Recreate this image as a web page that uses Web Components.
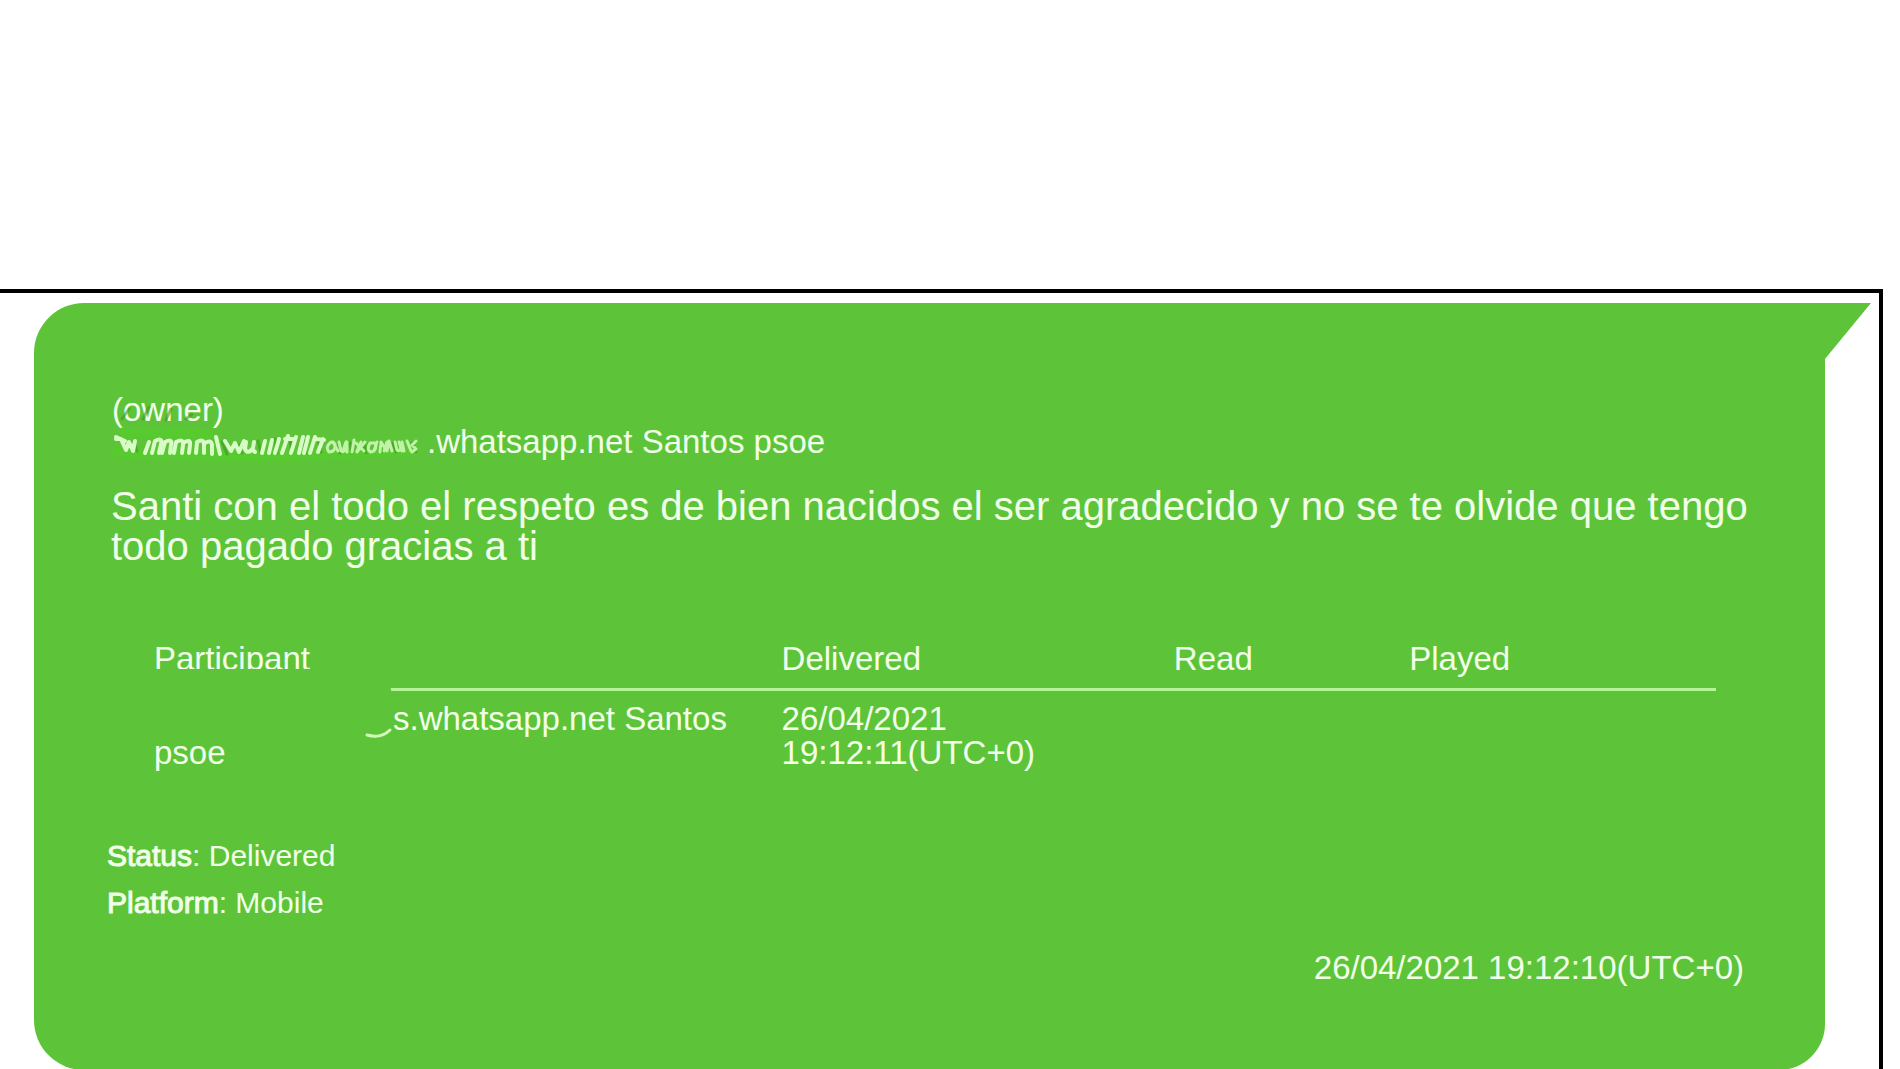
<!DOCTYPE html>
<html lang="es">
<head>
<meta charset="UTF-8">
<meta name="viewport" content="width=device-width, initial-scale=1.0">
<title>Chat message report</title>
<style>
  * { box-sizing: border-box; }
  html, body { margin: 0; }
  body {
    --bubble: #5dc43a;
    --ink: #f1ffe9;
    --rule: #b5f59a;
    background: #fff;
    color: var(--ink);
    font-family: "Liberation Sans", Arial, sans-serif;
    font-size: 33px;
    height: 100vh;
    overflow: hidden;
  }
</style>
</head>
<body>
<report-frame>
  <chat-bubble>
    <message-sender name="(owner)" address=".whatsapp.net Santos psoe"></message-sender>
    <message-text>Santi con el todo el respeto es de bien nacidos el ser agradecido y no se te olvide que tengo todo pagado gracias a ti</message-text>
    <participant-table></participant-table>
    <message-meta status="Delivered" platform="Mobile"></message-meta>
    <message-time>26/04/2021 19:12:10(UTC+0)</message-time>
  </chat-bubble>
</report-frame>

<script>
// Page frame: black line on the top and right side
class ReportFrame extends HTMLElement {
  constructor() {
    super();
    this.attachShadow({ mode: 'open' });
  }

  connectedCallback() {
    this.shadowRoot.innerHTML = `
      <style>
        :host {
          display: block;
          margin: 289px 17px 0 0;
          padding: 10px 54px 40px 34px;
          border-top: 4px solid #000;
          border-right: 4px solid #000;
        }
      </style>
      <slot></slot>
    `;
  }
}

class ChatBubble extends HTMLElement {
  constructor() {
    super();
    this.attachShadow({ mode: 'open' });
  }

  connectedCallback() {
    this.shadowRoot.innerHTML = `
      <style>
        :host {
          display: block;
          position: relative;
          background: var(--bubble);
          border-radius: 50px 0 46px 50px;
          padding: 91px 71px 85px 73px;
        }
        .tail {
          position: absolute;
          top: 0;
          left: 100%;
          width: 46px;
          height: 56px;
          fill: var(--bubble);
        }
      </style>
      <svg class="tail" viewBox="0 0 46 56" aria-hidden="true"><path d="M-1 0H46L0 56H-1Z"/></svg>
      <slot></slot>
    `;
  }
}

class MessageSender extends HTMLElement {
  constructor() {
    super();
    this.attachShadow({ mode: 'open' });
  }

  connectedCallback() {
    this.render();
  }

  render() {
    this.shadowRoot.innerHTML = `
      <style>
        :host {
          display: block;
          margin: 0 5px 28px;
          line-height: 32px;
        }
        .address {
          display: flex;
        }
        svg {
          width: 315px;
          height: 32px;
          flex: none;
          overflow: visible;
        }
        path {
          fill: none;
          stroke-linecap: round;
          stroke-linejoin: round;
        }
        .smear { stroke: #55cc2c; stroke-width: 10; opacity: 0.8; }
        .shade { stroke: #3f9a20; stroke-width: 3; opacity: 0.6; }
        .light { stroke: #d8fcc6; stroke-width: 4; }
        .thin { stroke: #c0f2a8; stroke-width: 3; }
      </style>
      <div>${this.getAttribute('name')}</div>
      <div class="address">
        <svg viewBox="0 0 315 32" aria-hidden="true">
          <path class="smear" d="M4 27C50 31 80 28 120 30S240 28 302 25M12 6C50 7 70 5 96 8"/>
          <path class="shade" d="M10 -7l7 -10M31 -7l6 -12M54 -6l5 -11M74 -7l6 -5M22 16l3 9M110 16l5 12M127 19l3 8M146 15l3 12M163 13l2 14M178 13l2 14M192 13l2 14M206 13l3 13M224 19l4 8M238 17l2 10M252 17l2 10M268 18l2 8M281 17l3 9M300 17l4 9"/>
          <path class="light" d="M4 13l5 0l5 11l3 -8l4 9l2 -10M4 11l9 4"/>
          <path class="light" d="M33 27l4 -11M40 27l3 -12q8 -4 6 3l-2 9M50 27l3 -11q8 -4 6 3l-1 8M62 27l2 -11q8 -4 7 3l-1 8M71 17q8 -5 7 2l-1 8M84 27l1 -11q7 -4 7 3l0 8M93 17q6 -4 7 2l0 9"/>
          <path class="light" d="M104 11l4 17M113 15l6 10l4 -8l4 9l5 -11M134 16l-1 7q3 6 8 -1l1 -6M141 24l2 2M153 15l-3 12M160 14l-3 13M167 13l-4 14M176 10l-6 17M173 13h8M184 11l-5 16M191 11l-4 16M196 11l-4 16M203 11l-5 16M211 13l-5 13M204 13l8 1"/>
          <path class="thin" d="M218 17q-5 4 -1 9q7 0 6 -8q-3 -3 -5 -1M227 16l2 9q5 3 6 -9l0 10M242 14l-2 12M244 17l8 8M253 16l-8 10M258 17q-4 7 1 9q7 -2 4 -9zM268 26l1 -10l6 9l2 -10l3 10M283 16l2 8q4 3 5 -8l2 9"/>
          <path class="thin" d="M221 16l5 9M234 16l-3 9M249 16l-4 9M265 16l-3 9M275 16l-3 9M287 16l3 9M295 15l4 10M304 15l-4 4l4 4l-4 3"/>
        </svg>
        <span>${this.getAttribute('address')}</span>
      </div>
    `;
  }
}

class MessageText extends HTMLElement {
  constructor() {
    super();
    this.attachShadow({ mode: 'open' });
  }

  connectedCallback() {
    this.shadowRoot.innerHTML = `
      <style>
        :host {
          display: block;
          margin: 0 0 76px 4px;
          font-size: 40px;
          line-height: 40px;
        }
      </style>
      <slot></slot>
    `;
  }
}

class ParticipantTable extends HTMLElement {
  constructor() {
    super();
    this.attachShadow({ mode: 'open' });
  }

  connectedCallback() {
    this.render();
  }

  render() {
    this.shadowRoot.innerHTML = `
      <style>
        :host {
          display: block;
          position: relative;
          margin: 0 38px 62px 40px;
          line-height: 34px;
        }
        table {
          width: 100%;
          table-layout: fixed;
          border-collapse: separate;
          border-spacing: 0;
        }
        th, td {
          text-align: left;
          vertical-align: top;
          font-weight: normal;
        }
        th {
          padding: 0 7px 12px;
          border-bottom: 3px solid var(--rule);
        }
        td { padding: 11px 7px 0; }
        .blank {
          display: inline-block;
          width: 239px;
        }
        .eraser {
          position: absolute;
          top: 26px;
          left: 0;
          width: 250px;
          height: 76px;
          overflow: visible;
        }
      </style>
      <table>
        <colgroup>
          <col style="width: 40%"><col style="width: 25%"><col style="width: 15%"><col style="width: 20%">
        </colgroup>
        <thead>
          <tr><th>Participant</th><th>Delivered</th><th>Read</th><th>Played</th></tr>
        </thead>
        <tbody>
          <tr>
            <td><span class="blank"></span>s.whatsapp.net Santos psoe</td>
            <td>26/04/2021 19:12:11(UTC+0)</td>
            <td></td>
            <td></td>
          </tr>
        </tbody>
      </table>
      <svg class="eraser" viewBox="0 0 250 76" aria-hidden="true">
        <path d="M-2 1H225C240 8 244 16 245 28L246 42L242 56L220 64H-2Z" fill="var(--bubble)"/>
        <path d="M220 67Q234 71 243 62" fill="none" stroke="#d2fbbd" stroke-width="3" stroke-linecap="round"/>
      </svg>
    `;
  }
}

class MessageMeta extends HTMLElement {
  constructor() {
    super();
    this.attachShadow({ mode: 'open' });
  }

  connectedCallback() {
    this.render();
  }

  render() {
    this.shadowRoot.innerHTML = `
      <style>
        :host {
          display: block;
          margin-bottom: 25px;
          font-size: 30px;
          line-height: 47px;
        }
        .label { -webkit-text-stroke: 1px var(--ink); }
      </style>
      <div><span class="label">Status</span>: ${this.getAttribute('status')}</div>
      <div><span class="label">Platform</span>: ${this.getAttribute('platform')}</div>
    `;
  }
}

class MessageTime extends HTMLElement {
  constructor() {
    super();
    this.attachShadow({ mode: 'open' });
  }

  connectedCallback() {
    this.shadowRoot.innerHTML = `
      <style>
        :host {
          display: block;
          margin-right: 10px;
          text-align: right;
          line-height: 34px;
        }
      </style>
      <slot></slot>
    `;
  }
}

customElements.define('report-frame', ReportFrame);
customElements.define('chat-bubble', ChatBubble);
customElements.define('message-sender', MessageSender);
customElements.define('message-text', MessageText);
customElements.define('participant-table', ParticipantTable);
customElements.define('message-meta', MessageMeta);
customElements.define('message-time', MessageTime);
</script>
</body>
</html>
